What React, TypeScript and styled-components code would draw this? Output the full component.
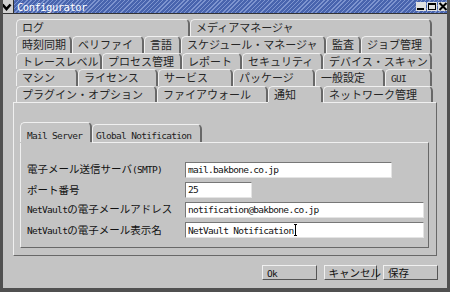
import styled, { createGlobalStyle, css } from "styled-components";

const BG = "#c4c4c4";
const LIGHT = "#f0f0f0";
const DARK = "#686868";

interface ITab {
  label: string;
  width: number;
  selected?: boolean;
}

const tabRows: ITab[][] = [
  [
    { label: "ログ", width: 174 },
    { label: "メディアマネージャ", width: 242 },
  ],
  [
    { label: "時刻同期", width: 56 },
    { label: "ベリファイ", width: 72 },
    { label: "言語", width: 37 },
    { label: "スケジュール・マネージャ", width: 145 },
    { label: "監査", width: 35 },
    { label: "ジョブ管理", width: 71 },
  ],
  [
    { label: "トレースレベル", width: 86 },
    { label: "プロセス管理", width: 80 },
    { label: "レポート", width: 60 },
    { label: "セキュリティ", width: 81 },
    { label: "デバイス・スキャン", width: 109 },
  ],
  [
    { label: "マシン", width: 62 },
    { label: "ライセンス", width: 80 },
    { label: "サービス", width: 75 },
    { label: "パッケージ", width: 82 },
    { label: "一般設定", width: 70 },
    { label: "GUI", width: 47 },
  ],
  [
    { label: "プラグイン・オプション", width: 141 },
    { label: "ファイアウォール", width: 111 },
    { label: "通知", width: 55, selected: true },
    { label: "ネットワーク管理", width: 110 },
  ],
];

const rowHeights = [17, 17, 16, 17, 16];

function App() {
  return (
    <>
      <GlobalStyle />
      <Frame>
        <TitleBar>
          <MenuButton>
            <svg width="13" height="12" viewBox="0 0 13 12">
              <polyline
                points="2.5,3.5 6.5,8 10.5,3.5"
                fill="none"
                stroke="#000"
                strokeWidth="2.6"
              />
            </svg>
          </MenuButton>
          <TitleFill>
            <Title>Configurator</Title>
            <WinButtons>
              <WinButton>
                <svg width="10" height="9" viewBox="0 0 10 9">
                  <rect x="1" y="6" width="7" height="2" fill="#000" />
                </svg>
              </WinButton>
              <WinButton>
                <svg width="10" height="9" viewBox="0 0 10 9">
                  <rect x="1.5" y="1.5" width="7" height="6" fill="none" stroke="#000" />
                  <rect x="1" y="1" width="8" height="2" fill="#000" />
                </svg>
              </WinButton>
              <WinButton>
                <svg width="10" height="9" viewBox="0 0 10 9">
                  <path d="M1.5 1 L8.5 8 M8.5 1 L1.5 8" stroke="#000" strokeWidth="2" />
                </svg>
              </WinButton>
            </WinButtons>
          </TitleFill>
        </TitleBar>

        <Body>
          <TabRows>
            {tabRows.map((row, i) => (
              <TabRow key={i} $h={rowHeights[i]}>
                {row.map((tab) => (
                  <Tab key={tab.label} $w={tab.width} $selected={tab.selected}>
                    {tab.label === "GUI" ? <Half>GUI</Half> : tab.label}
                  </Tab>
                ))}
              </TabRow>
            ))}
          </TabRows>

          <Panel>
            <SubTabRow>
              <SubTab $w={72} $selected>
                <Half>Mail Server</Half>
              </SubTab>
              <SubTab $w={110}>
                <Half>Global Notification</Half>
              </SubTab>
            </SubTabRow>
            <SubPanel>
              <Form>
                <Label>
                  電子メール送信サーバ<Half>(SMTP)</Half>
                </Label>
                <Field $w={207}>mail.bakbone.co.jp</Field>
                <Label>ポート番号</Label>
                <Field $w={67}>25</Field>
                <Label>
                  <Half>NetVault</Half>の電子メールアドレス
                </Label>
                <Field $w={239}>notification@bakbone.co.jp</Field>
                <Label>
                  <Half>NetVault</Half>の電子メール表示名
                </Label>
                <Field $w={239}>
                  NetVault Notification
                  <Caret />
                </Field>
              </Form>
            </SubPanel>
          </Panel>

          <ButtonRow>
            <Button $w={55}>
              <Half>Ok</Half>
            </Button>
            <Button $w={53}>キャンセル</Button>
            <Button $w={55}>保存</Button>
          </ButtonRow>
        </Body>
      </Frame>
    </>
  );
}

const GlobalStyle = createGlobalStyle`
  html, body {
    margin: 0;
    padding: 0;
    background: ${BG};
  }
  body {
    font-family: "Noto Sans CJK JP", sans-serif;
  }
`;

const Frame = styled.div`
  position: relative;
  box-sizing: border-box;
  width: 450px;
  height: 292px;
  display: flex;
  flex-direction: column;
  background: ${BG};
  border-left: 3px solid #505050;
  border-right: 3px solid #505050;
  border-bottom: 4px solid #505050;
  overflow: hidden;
  &::before,
  &::after {
    content: "";
    position: absolute;
    bottom: -4px;
    width: 14px;
    height: 4px;
    background: #3d5aa8;
  }
  &::before {
    left: 0;
  }
  &::after {
    right: 0;
  }
`;

const TitleBar = styled.div`
  display: flex;
  height: 13px;
  flex: none;
  margin-left: -3px;
  margin-right: -3px;
  border-bottom: 1px solid #333;
`;

const MenuButton = styled.div`
  width: 13px;
  flex: none;
  display: flex;
  align-items: center;
  justify-content: center;
  background: #d0d0d0;
  border-right: 1px solid #333;
`;

const TitleFill = styled.div`
  flex: 1;
  display: flex;
  align-items: center;
  padding-left: 3px;
  background: repeating-linear-gradient(
    135deg,
    #7d94cf 0px,
    #7d94cf 1px,
    #4864ae 1px,
    #4864ae 3px
  );
`;

const Title = styled.div`
  flex: 1;
  color: #fff;
  font-family: "DejaVu Sans Mono", monospace;
  font-size: 10.5px;
  letter-spacing: -0.5px;
  line-height: 12px;
`;

const WinButtons = styled.div`
  display: flex;
  gap: 1px;
  padding-right: 2px;
`;

const WinButton = styled.div`
  width: 10px;
  height: 9px;
  display: flex;
  background: #e0e0e0;
`;

const Body = styled.div`
  flex: 1;
  display: flex;
  flex-direction: column;
  padding: 5px 10px 0 10px;
`;

const TabRows = styled.div`
  display: flex;
  flex-direction: column;
  padding-left: 3px;
`;

const TabRow = styled.div<{ $h: number }>`
  display: flex;
  height: ${(p) => p.$h}px;
`;

const Tab = styled.div<{ $w: number; $selected?: boolean }>`
  box-sizing: border-box;
  flex: none;
  width: ${(p) => p.$w}px;
  height: 100%;
  padding-left: 5px;
  border-top: 1px solid ${LIGHT};
  border-left: 1px solid ${LIGHT};
  border-right: 2px solid ${DARK};
  border-radius: 5px 5px 0 0;
  background: ${BG};
  font-size: 11px;
  line-height: 15px;
  color: #262626;
  white-space: nowrap;
  overflow: hidden;
  ${(p) =>
    p.$selected &&
    css`
      position: relative;
      z-index: 1;
      box-shadow: 0 2px 0 ${BG};
    `}
`;

const Half = styled.span`
  font-family: "DejaVu Sans Mono", monospace;
  font-size: 9.5px;
  letter-spacing: -0.7px;
`;

const Panel = styled.div`
  box-sizing: border-box;
  height: 154px;
  display: flex;
  flex-direction: column;
  padding: 19px 7px 7px 6px;
  border-top: 1px solid ${LIGHT};
  border-left: 1px solid ${LIGHT};
  border-right: 1px solid ${DARK};
  border-bottom: 1px solid ${DARK};
`;

const SubTabRow = styled.div`
  display: flex;
  height: 20px;
  align-items: flex-end;
`;

const SubTab = styled.div<{ $w: number; $selected?: boolean }>`
  box-sizing: border-box;
  width: ${(p) => p.$w}px;
  height: ${(p) => (p.$selected ? 20 : 18)}px;
  padding-left: ${(p) => (p.$selected ? 6 : 3)}px;
  border-top: 1px solid ${LIGHT};
  border-left: 1px solid ${LIGHT};
  border-right: 2px solid ${DARK};
  border-radius: 5px 5px 0 0;
  line-height: ${(p) => (p.$selected ? 19 : 15)}px;
  color: #1c1c1c;
  white-space: nowrap;
  ${(p) =>
    p.$selected &&
    css`
      position: relative;
      z-index: 1;
      box-shadow: 0 1px 0 ${BG};
    `}
`;

const SubPanel = styled.div`
  box-sizing: border-box;
  height: 106px;
  border-top: 1px solid ${LIGHT};
  border-left: 1px solid ${LIGHT};
  border-right: 1px solid ${DARK};
  border-bottom: 1px solid ${DARK};
`;

const Form = styled.div`
  display: grid;
  grid-template-columns: 158px auto;
  row-gap: 3.5px;
  align-items: center;
  justify-items: start;
  padding: 18px 0 0 6px;
`;

const Label = styled.div`
  font-size: 10.5px;
  line-height: 16px;
  color: #111;
  white-space: nowrap;
`;

const Field = styled.div<{ $w: number }>`
  box-sizing: border-box;
  width: ${(p) => p.$w}px;
  height: 16px;
  display: flex;
  align-items: center;
  padding-left: 2px;
  background: #fff;
  border-top: 1px solid #777;
  border-left: 1px solid #777;
  border-bottom: 1px solid #e4e4e4;
  border-right: 1px solid #e4e4e4;
  font-family: "DejaVu Sans Mono", monospace;
  font-size: 9.5px;
  letter-spacing: -0.7px;
  color: #111;
  white-space: pre;
`;

const Caret = styled.span`
  display: inline-block;
  width: 3px;
  height: 10px;
  margin-left: 1px;
  border-top: 1px solid #000;
  border-bottom: 1px solid #000;
  background: linear-gradient(#000, #000) center / 1px 100% no-repeat;
`;

const ButtonRow = styled.div`
  display: flex;
  justify-content: flex-end;
  gap: 6.5px;
  margin-top: 9px;
  margin-right: -1px;
`;

const Button = styled.div<{ $w: number }>`
  box-sizing: border-box;
  width: ${(p) => p.$w}px;
  height: 15px;
  padding-left: 4px;
  border-top: 1px solid ${LIGHT};
  border-left: 1px solid ${LIGHT};
  border-right: 1px solid #555;
  border-bottom: 1px solid #555;
  font-size: 10.5px;
  line-height: 13px;
  color: #111;
  white-space: nowrap;
`;

export default App;
